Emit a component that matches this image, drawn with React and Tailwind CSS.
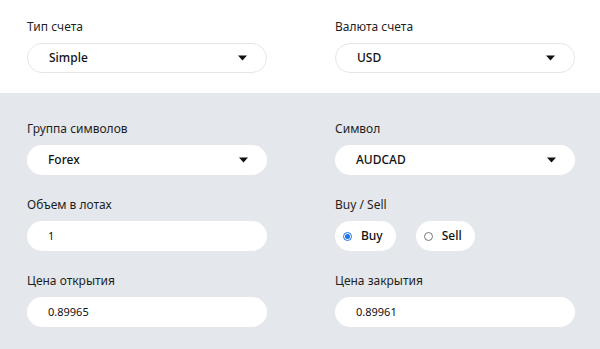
const font = { fontFamily: '"Noto Sans", "Open Sans", sans-serif' };

function Label({ children }) {
  return <div className="text-[12px] leading-4 text-[#1f1f1f] mb-2">{children}</div>;
}

function Select({ value, bordered }) {
  return (
    <div
      className={
        "h-[30px] rounded-full bg-white flex items-center justify-between pl-[21px] pr-[19px] " +
        (bordered ? "border border-[#e6e6e6]" : "")
      }
    >
      <span className="text-[12px] font-medium text-[#111]">{value}</span>
      <svg width="9" height="6" viewBox="0 0 9 6">
        <path d="M0 0.5h9L4.5 5.5z" fill="#111" />
      </svg>
    </div>
  );
}

function Input({ value }) {
  return (
    <div className="h-[30px] rounded-full bg-white flex items-center pl-[21px]">
      <span className="text-[11px] text-[#111]">{value}</span>
    </div>
  );
}

function Radio({ label, checked }) {
  return (
    <div className="h-[30px] rounded-full bg-white flex items-center pl-[8px] pr-[13px] gap-[9px]">
      {checked ? (
        <span className="w-[9px] h-[9px] rounded-full border border-[#1a73e8] flex items-center justify-center">
          <span className="w-[5px] h-[5px] rounded-full bg-[#1a73e8]" />
        </span>
      ) : (
        <span className="w-[9px] h-[9px] rounded-full border border-[#777]" />
      )}
      <span className="text-[12px] font-medium text-[#111]">{label}</span>
    </div>
  );
}

export default function App() {
  return (
    <div className="w-[600px] h-[349px] bg-[#e4e7eb]" style={font}>
      <div className="bg-white pt-[19px] pb-[20px] pl-[27px] pr-[25px] grid grid-cols-2 gap-x-[68px]">
        <div>
          <Label>Тип счета</Label>
          <Select value="Simple" bordered />
        </div>
        <div>
          <Label>Валюта счета</Label>
          <Select value="USD" bordered />
        </div>
      </div>
      <div className="pt-[28px] pl-[27px] pr-[25px] grid grid-cols-2 gap-x-[68px] gap-y-[22px]">
        <div>
          <Label>Группа символов</Label>
          <Select value="Forex" />
        </div>
        <div>
          <Label>Символ</Label>
          <Select value="AUDCAD" />
        </div>
        <div>
          <Label>Объем в лотах</Label>
          <Input value="1" />
        </div>
        <div>
          <Label>Buy / Sell</Label>
          <div className="flex gap-[20px]">
            <Radio label="Buy" checked />
            <Radio label="Sell" />
          </div>
        </div>
        <div>
          <Label>Цена открытия</Label>
          <Input value="0.89965" />
        </div>
        <div>
          <Label>Цена закрытия</Label>
          <Input value="0.89961" />
        </div>
      </div>
    </div>
  );
}
